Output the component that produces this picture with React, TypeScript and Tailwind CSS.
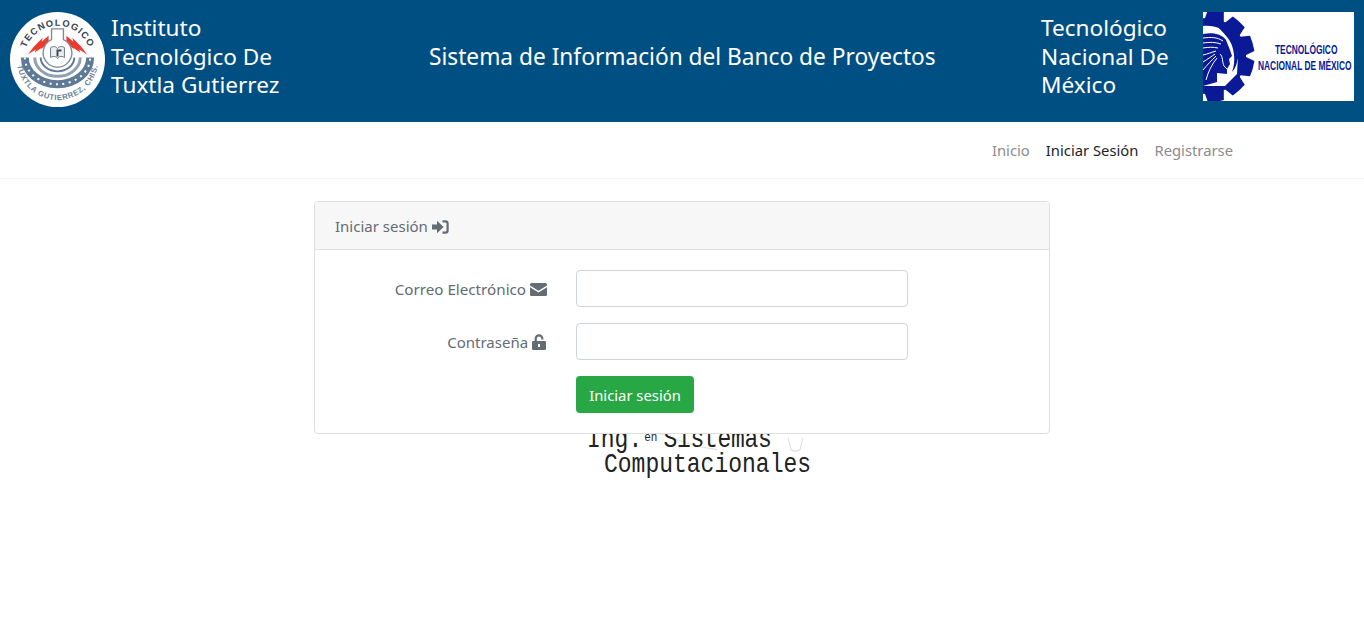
import React from "react";

const sans = "font-['Noto_Sans',sans-serif]";

function SealLogo() {
  return (
    <svg width="95" height="95" viewBox="0 0 96 96" className="shrink-0">
      <circle cx="48" cy="48" r="48" fill="#ffffff" />
      <defs>
        <path id="topArc" d="M 14 48 A 34 34 0 0 1 82 48" />
        <path id="botArc" d="M 7 48 A 41 41 0 0 0 89 48" />
      </defs>
      <path d="M39 24 L32 30 L33 26 L24 35 L18 43 L26 38 L25 41 L32 36 L31 38 L39 31 Z" fill="#ee3a2c" />
      <path d="M57 24 L64 30 L63 26 L72 35 L78 43 L70 38 L71 41 L64 36 L65 38 L57 31 Z" fill="#ee3a2c" />
      <path d="M15 46 A33 27 0 0 0 81 46" fill="none" stroke="#5f7a96" strokeWidth="8" />
      <path d="M15 46 A33 27 0 0 0 81 46" fill="none" stroke="#ffffff" strokeWidth="2" strokeDasharray="2 4.5" />
      <path d="M25 46 A23 19 0 0 0 71 46" fill="none" stroke="#8fa1b3" strokeWidth="3" />
      <path d="M31 46 A17 14 0 0 0 65 46" fill="none" stroke="#5f7a96" strokeWidth="2" />
      <path d="M42 17 H54 V28 A14.5 14.5 0 1 1 42 28 Z" fill="#ffffff" stroke="#7d8c9b" strokeWidth="1.4" />
      <path d="M41 36 C44 34 47 35 48 37 C49 35 52 34 55 36 V46 C52 44 49 45 48 47 C47 45 44 44 41 46 Z" fill="#e9edf1" stroke="#5a6774" strokeWidth="0.9" />
      <path d="M47 38 H52 V40 H49 V45 H47 Z" fill="#3f4a55" />
      <text fontFamily="Liberation Sans, sans-serif" fontSize="9.4" fontWeight="700" fill="#39424d" letterSpacing="1.2">
        <textPath href="#topArc" startOffset="50%" textAnchor="middle">TECNOLOGICO</textPath>
      </text>
      <text fontFamily="Liberation Sans, sans-serif" fontSize="7.8" fontWeight="700" fill="#6d8096" letterSpacing="0.6">
        <textPath href="#botArc" startOffset="50%" textAnchor="middle">TUXTLA GUTIERREZ, CHIS.</textPath>
      </text>
    </svg>
  );
}

function TecnmLogo() {
  const teeth = [-80, -48, -16, 16, 48, 80, 112, 248];
  return (
    <div className="w-[151px] h-[89px] bg-white overflow-hidden shrink-0 flex">
      <svg width="151" height="89" viewBox="0 0 151 89" className="shrink-0">
        <g fill="#0a1a96">
          {teeth.map((a) => (
            <path key={a} d="M-8 -46 Q0 -47 8 -46 L10 -34 L-10 -34 Z" transform={`translate(5 44) rotate(${a + 90})`} />
          ))}
          <circle cx="5" cy="44" r="38" />
        </g>
        <path d="M0 14 C18 12 32 24 35 44 L34 62 L22 74 L0 74 Z" fill="#ffffff" />
        <path d="M12 12 C26 16 36 30 35 46 C34 52 32 57 29 60 C33 50 32 34 24 25 C20 20 16 16 12 12 Z" fill="#0a1a96" />
        <path d="M0 22 C10 20 19 22 23 28 L27 38 L29 44 L26 47 L27 52 L24 57 L24 62 L14 61 L14 70 L0 74 Z" fill="#0a1a96" />
        <path d="M0 26 C8 25 14 25 20 29 M0 31 C7 30 12 30 18 32 M0 36 C6 35 10 35 15 36 M0 43 C5 42 9 40 13 39 M0 50 C5 47 9 44 12 42 M0 58 C4 53 9 48 13 44 M3 68 C5 60 9 52 14 46" stroke="#ffffff" strokeWidth="1" fill="none" />
        <path d="M17 42 C20 44 19 50 21 54 L24 57" stroke="#ffffff" strokeWidth="1" fill="none" />
        <text transform="translate(72 42) scale(0.7 1)" fontFamily="Liberation Sans, sans-serif" fontSize="12" fontWeight="700" fill="#0a1a96">TECNOLÓGICO</text>
        <text transform="translate(55 58) scale(0.7 1)" fontFamily="Liberation Sans, sans-serif" fontSize="12" fontWeight="700" fill="#0a1a96">NACIONAL DE MÉXICO</text>
      </svg>
    </div>
  );
}

function SignIn() {
  return (
    <svg width="17" height="14" viewBox="0 0 17 14" className="inline-block align-[-2px]" fill="currentColor">
      <path d="M0 4.6 H5 V0.8 L11.6 7 L5 13.2 V9.4 H0 Z" />
      <path d="M10.5 0.3 H13.5 A3.2 3.2 0 0 1 16.7 3.5 V10.5 A3.2 3.2 0 0 1 13.5 13.7 H10.5 V11.5 H13.3 A1.2 1.2 0 0 0 14.5 10.3 V3.7 A1.2 1.2 0 0 0 13.3 2.5 H10.5 Z" />
    </svg>
  );
}

function Envelope() {
  return (
    <svg width="17" height="13" viewBox="0 0 17 13" className="inline-block align-[-1px]" fill="currentColor">
      <path d="M1.5 0 H15.5 A1.5 1.5 0 0 1 17 1.5 V2.4 L8.5 7.8 L0 2.4 V1.5 A1.5 1.5 0 0 1 1.5 0 Z" />
      <path d="M0 4.2 L8.5 9.6 L17 4.2 V11.5 A1.5 1.5 0 0 1 15.5 13 H1.5 A1.5 1.5 0 0 1 0 11.5 Z" />
    </svg>
  );
}

function Unlock() {
  return (
    <svg width="15" height="16" viewBox="0 0 15 16" className="inline-block align-[-2px]" fill="currentColor">
      <path fillRule="evenodd" d="M2.6 7 V4.6 A4.4 4.4 0 0 1 11.4 4.6 V5.6 H9.2 V4.6 A2.2 2.2 0 0 0 4.8 4.6 V7 H12.8 A1.2 1.2 0 0 1 14 8.2 V14.8 A1.2 1.2 0 0 1 12.8 16 H1.2 A1.2 1.2 0 0 1 0 14.8 V8.2 A1.2 1.2 0 0 1 1.2 7 Z M6 10 V13 H8 V10 Z" />
    </svg>
  );
}

function Watermark() {
  return (
    <svg width="230" height="24" viewBox="0 0 230 24" className="absolute left-[60px] top-0" fill="none" stroke="#dedede" strokeWidth="1">
      <path d="M10 4 C30 10 50 16 70 18" />
      <path d="M141 8 L144 18 Q148 21 153 18 L156 8" />
    </svg>
  );
}

export default function App() {
  return (
    <div className={`${sans} min-h-[624px] bg-white text-[#212529]`}>
      <header className="h-[122px] bg-[#004f83] text-white flex items-center">
        <div className="ml-[10px] w-[96px] mb-[3px]">
          <SealLogo />
        </div>
        <div className="ml-[5px] w-[200px] text-[22.6px] leading-[28.5px] pb-[8px]">
          Instituto<br />Tecnológico De<br />Tuxtla Gutierrez
        </div>
        <div className="ml-[118px] w-[612px] text-[22.7px] leading-[28px] pb-[8px]">
          Sistema de Información del Banco de Proyectos
        </div>
        <div className="w-[162px] text-[22.6px] leading-[28.5px] pb-[8px]">
          Tecnológico<br />Nacional De<br />México
        </div>
        <div className="mb-[9px]">
          <TecnmLogo />
        </div>
      </header>

      <nav className="h-[57px] border-b border-[#f4f4f4] flex items-center justify-end pr-[131px] text-[14.8px] gap-4">
        <a className="text-[#8c8c8c]">Inicio</a>
        <a className="text-[#212529]">Iniciar Sesión</a>
        <a className="text-[#8c8c8c]">Registrarse</a>
      </nav>

      <main className="pt-[22px]">
        <div className="relative z-10 w-[736px] h-[233px] ml-[314px] bg-white border border-[#dfdfdf] rounded-[4px] overflow-hidden">
          <div className="h-[48px] bg-[#f7f7f7] border-b border-[#dfdfdf] flex items-center pl-[20px] pt-[2px] text-[15px] text-[#646c74]">
            <span>Iniciar sesión <SignIn /></span>
          </div>
          <form className="pt-[20px] flex flex-col gap-4">
            <div className="flex items-center h-[37px]">
              <label className="w-[232px] text-right text-[15.2px] pt-[2px] text-[#646c74]">
                Correo Electrónico <Envelope />
              </label>
              <input className="ml-[29px] w-[332px] h-[37px] bg-white border border-[#ced4da] rounded-[4px]" />
            </div>
            <div className="flex items-center h-[37px]">
              <label className="w-[232px] text-right text-[15px] pt-[2px] text-[#646c74]">
                Contraseña <Unlock />
              </label>
              <input className="ml-[29px] w-[332px] h-[37px] bg-white border border-[#ced4da] rounded-[4px]" />
            </div>
            <div className="pl-[261px]">
              <button type="button" className="w-[118px] h-[37px] pt-[1px] bg-[#28a745] text-white text-[14.8px] rounded-[4px]">
                Iniciar sesión
              </button>
            </div>
          </form>
        </div>
        <div className="relative -mt-[6px] ml-[587px] font-['Liberation_Mono',monospace] text-[#222] text-[23px] leading-[20.8px] scale-y-[1.2] origin-top">
          <Watermark />
          <div className="relative flex items-start">
            <span>Ing.</span>
            <span className="ml-[2px] pt-[2px] text-[11px] leading-[13px]">en</span>
            <span className="ml-[6px] tracking-[-0.3px]">Sistemas</span>
          </div>
          <div className="relative pl-[17px]">Computacionales</div>
        </div>
      </main>
    </div>
  );
}
